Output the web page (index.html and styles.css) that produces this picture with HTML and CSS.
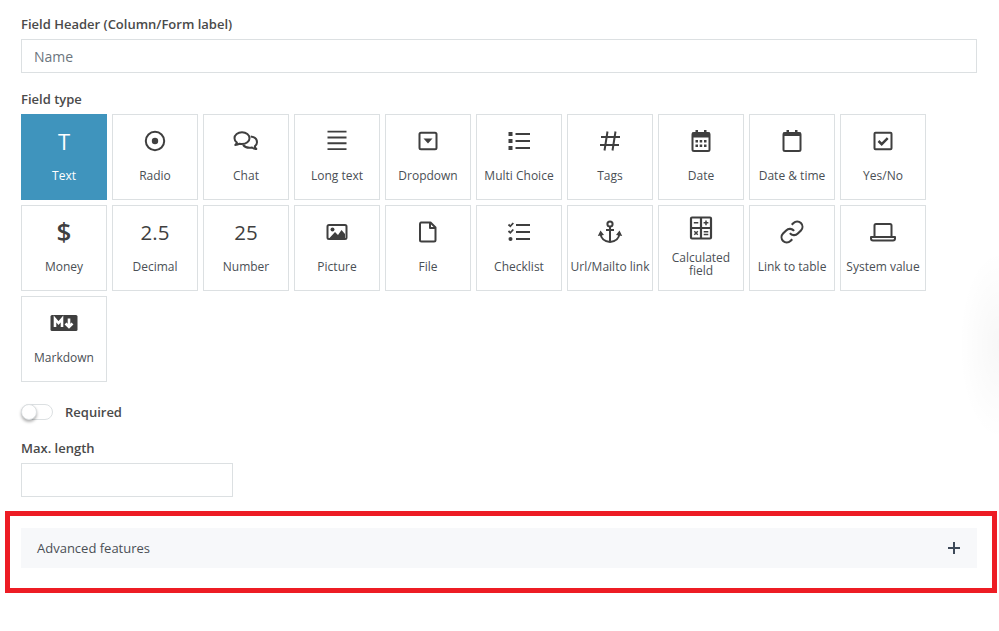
FILE: index.html
```html
<!DOCTYPE html>
<html lang="en">
<head>
<meta charset="utf-8">
<title>Field settings</title>
<link rel="stylesheet" href="styles.css">
</head>
<body>
<div class="glow"></div>
<main class="form">
  <label class="label label-first">Field Header (Column/Form label)</label>
  <div class="input input-name">Name</div>
  <label class="label label-type">Field type</label>
  <div class="grid">
    <button class="cell cell-active"><span class="icon icon-text">T</span><span class="name">Text</span></button>
    <button class="cell"><span class="icon"><svg viewBox="0 0 28 28"><circle cx="14" cy="14" r="9.2" class="s"/><circle cx="14" cy="14" r="3.2" class="f"/></svg></span><span class="name">Radio</span></button>
    <button class="cell"><span class="icon"><svg viewBox="0 0 28 28"><path class="s" d="M10 5.200c-4.300 0-7.500 2.700-7.500 6 0 1.800.9 3.300 2.400 4.400-.3 1-.9 1.800-1.700 2.400 1.800 0 3.300-.5 4.500-1.300.7.2 1.500.3 2.300.3 4.300 0 7.500-2.700 7.500-5.800s-3.200-6-7.500-6z"/><path class="s" d="M18.800 9.500c3.700.4 6.200 2.700 6.200 5.700 0 1.700-.9 3.100-2.200 4.100.2 1 .8 2 1.500 2.700-1.700 0-3.200-.6-4.300-1.500-.8.2-1.600.3-2.400.3-2.900 0-5.300-1.100-6.500-2.900"/></svg></span><span class="name">Chat</span></button>
    <button class="cell"><span class="icon"><svg viewBox="0 0 28 28"><path class="s" d="M4.500 5h19M4.500 11h19M4.500 17h19M4.500 23h19" transform="translate(0 -.2) scale(1 .97)"/></svg></span><span class="name">Long text</span></button>
    <button class="cell"><span class="icon"><svg viewBox="0 0 28 28"><rect class="s" x="5.500" y="5.800" width="17" height="16.400" rx="1.500"/><path class="f" d="M9.500 11.500h9l-4.500 5z"/></svg></span><span class="name">Dropdown</span></button>
    <button class="cell"><span class="icon"><svg viewBox="0 0 28 28"><path class="f" d="M3.500 5h4v4h-4zM3.500 12h4v4h-4zM3.500 19h4v4h-4z"/><path class="s" d="M10.500 7h14.500M10.500 14h14.500M10.500 21h14.500"/></svg></span><span class="name">Multi Choice</span></button>
    <button class="cell"><span class="icon"><svg viewBox="0 0 28 28"><path class="s" d="M11.500 4.500 8.500 23.500M19.500 4.500 16.500 23.500M5 10h19M4 18h19"/></svg></span><span class="name">Tags</span></button>
    <button class="cell"><span class="icon"><svg viewBox="0 0 28 28"><rect class="s" x="5.500" y="6" width="17" height="18" rx="1.500"/><path class="f" d="M5 5.500h18v5H5zM8.500 3h2.500v4H8.500zM17 3h2.500v4H17z"/><path class="f" d="M8.500 13h2.500v2.500H8.500zM12.700 13h2.500v2.500h-2.500zM17 13h2.500v2.500H17zM8.500 17.500h2.500V20H8.500zM12.700 17.500h2.500V20h-2.500zM17 17.500h2.500V20H17z"/></svg></span><span class="name">Date</span></button>
    <button class="cell"><span class="icon"><svg viewBox="0 0 28 28"><rect class="s" x="5.500" y="6" width="17" height="18" rx="1.500"/><path class="f" d="M5 5.500h18v3.500H5zM8.500 3h2.500v4H8.500zM17 3h2.500v4H17z"/></svg></span><span class="name">Date &amp; time</span></button>
    <button class="cell"><span class="icon"><svg viewBox="0 0 28 28"><rect class="s" x="5.500" y="5.800" width="17" height="16.400" rx="1"/><path class="s4" d="m9.500 14 3.200 3.200 6-6"/></svg></span><span class="name">Yes/No</span></button>

    <button class="cell"><span class="icon icon-dollar">$</span><span class="name">Money</span></button>
    <button class="cell"><span class="icon icon-num">2.5</span><span class="name">Decimal</span></button>
    <button class="cell"><span class="icon icon-num">25</span><span class="name">Number</span></button>
    <button class="cell"><span class="icon"><svg viewBox="0 0 28 28"><rect class="s" x="4.500" y="7" width="19" height="14" rx="1.500"/><circle class="f" cx="9.500" cy="11.500" r="2"/><path class="f" d="m6.500 20 5.500-6 3 3 3.500-5 3.500 4v4z"/></svg></span><span class="name">Picture</span></button>
    <button class="cell"><span class="icon"><svg viewBox="0 0 28 28"><path class="s" d="M7 4.500h9.500l5 5V22a1.500 1.500 0 0 1-1.500 1.500H7.500A1.500 1.500 0 0 1 6 22V6a1.500 1.500 0 0 1 1-1.500z"/><path class="s" d="M16 4.500V10h5.500"/></svg></span><span class="name">File</span></button>
    <button class="cell"><span class="icon"><svg viewBox="0 0 28 28"><path class="s2" d="m3.500 6.500 1.800 1.800 3-3.300M3.500 13l1.800 1.800 3-3.300"/><circle class="f" cx="5.500" cy="21" r="2"/><path class="s" d="M11 7h14M11 14h14M11 21h14"/></svg></span><span class="name">Checklist</span></button>
    <button class="cell"><span class="icon"><svg viewBox="0 0 28 28"><circle class="s" cx="14" cy="6" r="2.600"/><path class="s" d="M14 8.500v15.500M10 12h8M4.500 15.500c.5 4.800 4.200 8 9.500 8.500 5.300-.5 9-3.700 9.500-8.500"/><path class="f" d="m1.800 18 2.700-5.500 3.500 4.500zM26.200 18l-2.700-5.500-3.500 4.500z"/></svg></span><span class="name">Url/Mailto link</span></button>
    <button class="cell cell-two"><span class="icon"><svg viewBox="0 0 28 28"><rect class="s5" x="4" y="3.500" width="20" height="21" rx="1"/><path class="s5" d="M14 3.500v21M4 14h20"/><path class="s3" d="M6.800 8.800h4.500M16.600 8.800h4.800M19 6.400v4.800M7.300 17.300l3.500 3.500M10.800 17.300l-3.500 3.500M16.700 17.800h4.600M16.700 20.400h4.600"/></svg></span><span class="name">Calculated field</span></button>
    <button class="cell"><span class="icon"><svg viewBox="0 0 28 28"><g transform="translate(1.400 1.400) scale(1.050)"><path class="s" d="M10 13a5 5 0 0 0 7.540.54l3-3a5 5 0 0 0-7.070-7.070l-1.720 1.710"/><path class="s" d="M14 11a5 5 0 0 0-7.540-.54l-3 3a5 5 0 0 0 7.070 7.070l1.710-1.710"/></g></svg></span><span class="name">Link to table</span></button>
    <button class="cell"><span class="icon"><svg viewBox="0 0 28 28"><path class="s" d="M5.500 18V7.500A1.500 1.500 0 0 1 7 6h14a1.500 1.500 0 0 1 1.500 1.500V18"/><path class="s" d="M2 19h24v1.500a2 2 0 0 1-2 2H4a2 2 0 0 1-2-2z"/></svg></span><span class="name">System value</span></button>

    <button class="cell"><span class="icon icon-md"><svg viewBox="0 0 28 28"><rect class="f" x="0.500" y="6" width="27" height="16" rx="1.500"/><path class="w" d="M5 18v-8l3.500 4 3.500-4v8M19 9.500v8M15.500 14.500l3.500 3.500 3.500-3.500"/></svg></span><span class="name">Markdown</span></button>
  </div>

  <div class="required">
    <span class="toggle"><span class="knob"></span></span>
    <span class="required-text">Required</span>
  </div>

  <label class="label label-max">Max. length</label>
  <div class="input input-max"></div>

  <section class="highlight">
    <div class="advanced">
      <span>Advanced features</span>
      <svg class="plus" viewBox="0 0 12 12"><path d="M0 6h12M6 0v12"/></svg>
    </div>
  </section>
</main>
</body>
</html>
```

FILE: styles.css
```css
* { box-sizing: border-box; }
html, body { margin: 0; height: 100%; background: #fff; overflow: hidden; }
body { font-family: "Open Sans", sans-serif; color: #4a4f55; }

.glow {
  position: absolute; right: 0; top: 250px;
  width: 40px; height: 190px;
  background: radial-gradient(ellipse 40px 95px at 100% 50%, rgba(0,0,0,.03), rgba(0,0,0,0));
  pointer-events: none;
}

.form { padding: 15px 22px 0 21px; display: flex; flex-direction: column; }

.label { display: block; font-size: 13px; font-weight: 600; line-height: 18px; color: #4a4a4a; }
.label-first { margin-bottom: 6px; }
.label-type { margin-top: 17px; margin-bottom: 6px; }
.label-max { margin-top: 18px; margin-bottom: 6px; }

.input { height: 34px; border: 1px solid #dce0e2; background: #fff; font-size: 14px; line-height: 34px; padding-left: 12px; color: #6c757d; }
.input-max { width: 212px; }

.grid { display: grid; grid-template-columns: repeat(10, 86px); grid-auto-rows: 86px; gap: 5px; }
.cell {
  display: flex; flex-direction: column; align-items: center;
  padding: 12px 0 0; margin: 0;
  border: 1px solid #dce0e2; background: #fff;
  font-family: inherit; color: #4a4f55;
}
.cell-active { background: #3f94bd; border-color: #3f94bd; color: #fff; }
.cell-two { padding-top: 8px; }
.cell-two .icon { margin-bottom: 9px; }

.icon { display: flex; align-items: center; justify-content: center; width: 28px; height: 28px; margin-bottom: 14px; color: #3f3f3f; white-space: nowrap; }
.icon svg { display: block; width: 28px; height: 28px; }
.icon-text { color: #fff; font-size: 22px; }
.icon-num { font-size: 20.500px; }
.icon-dollar { font-size: 26px; font-weight: 600; padding-bottom: 2px; }

.s { fill: none; stroke: #3f3f3f; stroke-width: 2; stroke-linejoin: round; }
.s2 { fill: none; stroke: #3f3f3f; stroke-width: 1.800; }
.s3 { fill: none; stroke: #3f3f3f; stroke-width: 1.500; }
.s4 { fill: none; stroke: #3f3f3f; stroke-width: 2.500; }
.s5 { fill: none; stroke: #3f3f3f; stroke-width: 2.200; }
.f { fill: #3f3f3f; }
.w { fill: none; stroke: #fff; stroke-width: 2.600; }

.name { display: block; width: 100%; font-size: 12px; line-height: 13px; text-align: center; white-space: normal; }

.required { display: flex; align-items: center; height: 18px; margin-top: 21px; }
.toggle { position: relative; display: block; width: 32px; height: 16px; border: 1px solid #dce0e2; border-radius: 8px; background: #fff; }
.knob { position: absolute; left: -1px; top: -1px; width: 16px; height: 16px; border-radius: 50%; background: #fff; border: 1px solid #dce0e2; box-shadow: 0 2px 3px rgba(0,0,0,.3); }
.required-text { margin-left: 12px; font-size: 13px; font-weight: 600; color: #4a4a4a; }

.highlight { margin: 14px -20px 0 -16px; height: 82px; border: 5px solid #ed1c24; padding: 12px 15px 0 11px; }
.advanced { display: flex; align-items: center; justify-content: space-between; height: 40px; padding: 0 17px 0 16px; background: #f7f8fa; font-size: 13px; color: #4a4f55; }
.plus { display: block; width: 12px; height: 12px; }
.plus path { fill: none; stroke: #3e4a59; stroke-width: 2; }
```
